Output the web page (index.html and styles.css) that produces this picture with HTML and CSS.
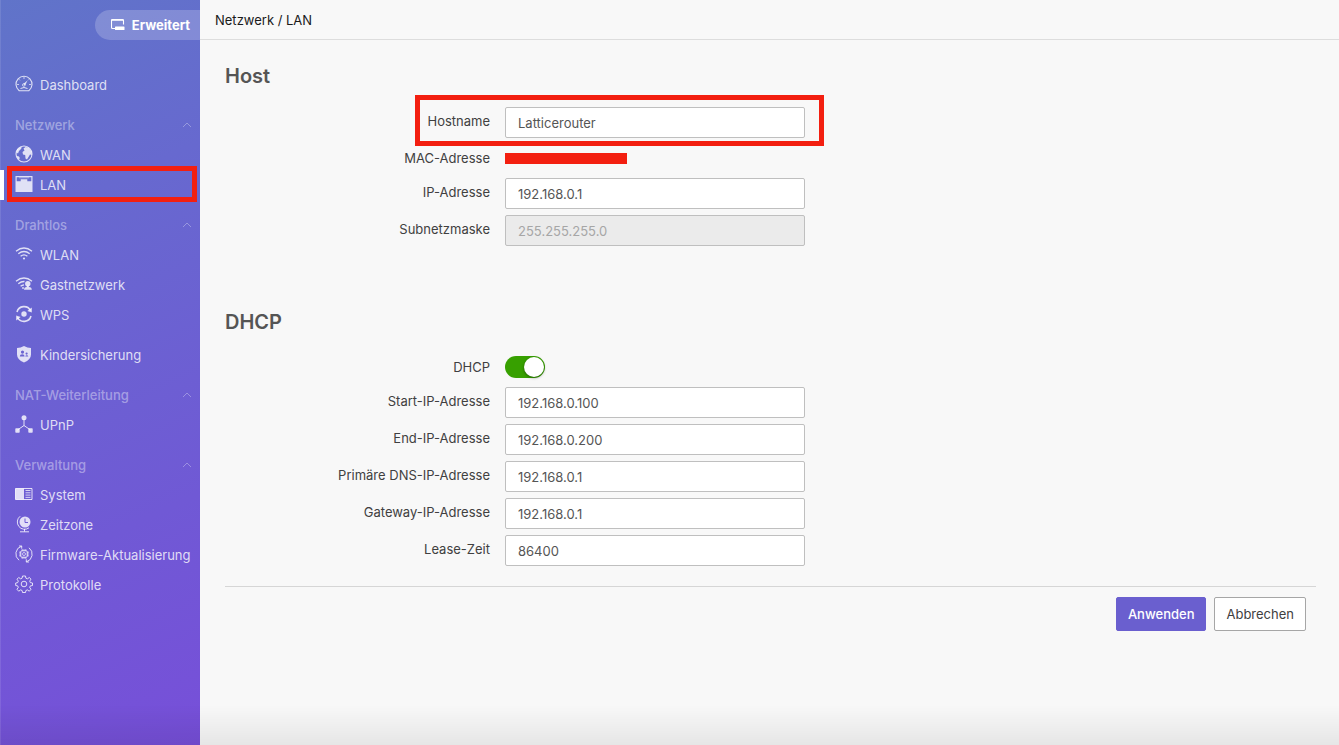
FILE: index.html
```html
<!DOCTYPE html>
<html lang="de">
<head>
    <meta charset="UTF-8">
    <meta name="viewport" content="width=device-width, initial-scale=1.0">
    <title>Netzwerk / LAN</title>
    <link rel="stylesheet" href="styles.css">
</head>
<body>
    <svg class="defs" width="0" height="0" aria-hidden="true">
        <symbol id="chevron" viewBox="0 0 10 6"><path d="M1 5 5 1l4 4" fill="none" stroke="currentColor" stroke-width=".8"/></symbol>
    </svg>

    <div class="layout">
        <aside class="sidebar">
            <button type="button" class="mode">
                <svg width="14" height="12" viewBox="0 0 14 12" fill="none" stroke="currentColor"><path d="M4 9.500H1.500q-1 0-1-1v-7q0-1 1-1h10q1 0 1 1v4" stroke-width="1.100"/><path d="M.5 1.200h12" stroke-width="1.200"/><rect x="4" y="7.500" width="9.500" height="3.500" rx=".6" fill="currentColor" stroke="none"/></svg>
                Erweitert
            </button>

            <nav class="menu">
                <div class="group">
                    <a class="item" href="#dashboard">
                        <svg class="icon" viewBox="0 0 18 18" fill="none" stroke="currentColor"><path d="M4.200 15.700a8 8 0 1 1 9.600 0z" stroke-width="1.100"/><path d="M9 2v2M3.800 4.200l1.100 1.100M2 9.500h2M14 9.500h2M13.800 4.500l-.8.8" stroke-width=".8"/><path d="m12.500 5.500-2.300 4.700-2-1.200z" fill="currentColor" stroke="none"/><circle cx="8.800" cy="10" r="1.300" stroke-width=".8"/><path d="M5.500 13.500q3.500-2 7 0" stroke-width="1"/></svg>
                        Dashboard
                    </a>
                </div>

                <div class="group">
                    <button type="button" class="title">Netzwerk <svg class="chevron"><use href="#chevron"/></svg></button>
                    <a class="item" href="#wan">
                        <svg class="icon" viewBox="0 0 18 18"><circle cx="9" cy="9" r="8" fill="none" stroke="currentColor" stroke-width="1.100"/><path d="M8.500 3.500 10.500 2l3 .5 3 4 .3 3.500-1.800-.5-1.500 2.500-1.500 2.500-1.500-1-.3-3.500-2.200-.5L7.500 7l2-1.500zM2 4.500 5.500 2 7 2.500 5.500 4.500 4 6l-1 2.500-1.500-1zM2 11l2 .5.8 1.500-.8 1.700L2 12.500z" fill="currentColor"/></svg>
                        WAN
                    </a>
                    <a class="item active" href="#lan">
                        <svg class="icon" viewBox="0 0 18 18"><path fill-rule="evenodd" d="M.5 1h17v16H.5zM1.700 2.300v3.900h4V4.200h6.600v2h4V2.300z" fill="currentColor"/><path d="M4 2.300h10v1H4z" fill="currentColor" opacity=".5"/></svg>
                        LAN
                    </a>
                </div>

                <div class="group">
                    <button type="button" class="title">Drahtlos <svg class="chevron"><use href="#chevron"/></svg></button>
                    <a class="item" href="#wlan">
                        <svg class="icon" viewBox="0 0 18 18" fill="none" stroke="currentColor" stroke-width="1.300"><path d="M1 6.200q8-6.400 16 0M3.300 8.800q5.700-4.600 11.400 0M5.600 11.300q3.400-2.700 6.800 0"/><circle cx="9" cy="13.500" r="1.100" fill="currentColor" stroke="none"/></svg>
                        WLAN
                    </a>
                    <a class="item" href="#gast">
                        <svg class="icon" viewBox="0 0 18 18" fill="none" stroke="currentColor" stroke-width="1.300"><path d="M1 6.200q8-6.400 16 0M3.300 8.800Q6.300 6.300 9.500 6.500M5.600 11.300Q7 10 9 9.800"/><circle cx="8" cy="13" r=".9" fill="currentColor" stroke="none"/><circle cx="12.800" cy="8.700" r="2.700" fill="currentColor" stroke="none"/><path d="M11.800 10.500h2v1.500q3 .3 3 2.800H9q0-2.500 2.800-2.800z" fill="currentColor" stroke="none"/></svg>
                        Gastnetzwerk
                    </a>
                    <a class="item" href="#wps">
                        <svg class="icon" viewBox="0 0 18 18" fill="none" stroke="currentColor" stroke-width="1.600"><path d="M2 7a7.300 7.300 0 0 1 13.500-1.500M16 11a7.300 7.300 0 0 1-13.500 1.500"/><circle cx="9" cy="9" r="2.700" fill="currentColor" stroke="none"/><path d="M16.800 2.500v5l-4.500-1.500zM1.200 15.500v-5L5.700 12z" fill="currentColor" stroke="none"/></svg>
                        WPS
                    </a>
                </div>

                <div class="group">
                    <a class="item" href="#kinder">
                        <svg class="icon" viewBox="0 0 18 18"><path fill-rule="evenodd" d="M9 1q3.300 2 7 2v6.500q0 5-7 8-7-3-7-8V3q3.700 0 7-2zM7.500 5.500a1.600 1.600 0 1 0 0 3.200 1.600 1.600 0 0 0 0-3.200zM4.800 11.500h4.800q0-2.200-2.400-2.200t-2.400 2.200zM11.600 7.500a1.100 1.100 0 1 0 0 2.200 1.100 1.100 0 0 0 0-2.200zM10.300 11.500h3q0-1.300-1.500-1.300t-1.500 1.300z" fill="currentColor"/></svg>
                        Kindersicherung
                    </a>
                </div>

                <div class="group">
                    <button type="button" class="title">NAT-Weiterleitung <svg class="chevron"><use href="#chevron"/></svg></button>
                    <a class="item" href="#upnp">
                        <svg class="icon" viewBox="0 0 18 18" fill="currentColor"><path d="M9 4v6.500L2.500 15M9 10.500l6.500 4.500" fill="none" stroke="currentColor"/><circle cx="9" cy="2.800" r="2.500"/><rect x=".3" y="13.300" width="4.400" height="4.400" rx=".7"/><rect x="13.300" y="13.300" width="4.400" height="4.400" rx=".7"/></svg>
                        UPnP
                    </a>
                </div>

                <div class="group">
                    <button type="button" class="title">Verwaltung <svg class="chevron"><use href="#chevron"/></svg></button>
                    <a class="item" href="#system">
                        <svg class="icon" viewBox="0 0 18 18"><path d="M.5 3.500h16.500v11H.5z" fill="none" stroke="currentColor"/><path d="M.5 3.500H9v11H.5z" fill="currentColor"/><path d="M10.500 5.500h5M10.500 7.800h5M10.500 10.100h5M10.500 12.400h5" stroke="currentColor" stroke-width=".9"/></svg>
                        System
                    </a>
                    <a class="item" href="#zeitzone">
                        <svg class="icon" viewBox="0 0 18 18" fill="none" stroke="currentColor"><circle cx="10" cy="7" r="5.500" fill="currentColor" stroke="none"/><path d="M5.200 1.200a7 7 0 0 0 8.800 11.600M9.500 14v2.500M5 16.800h9"/><path class="cut" d="M10 3.500v4h3"/></svg>
                        Zeitzone
                    </a>
                    <a class="item" href="#firmware">
                        <svg class="icon" viewBox="0 0 18 18" fill="none" stroke="currentColor"><path d="M6.500 1.200a8 8 0 0 0-2.500 14M11.500 16.800a8 8 0 0 0 2.500-14M4 1h2.700v2.700M14 17h-2.700v-2.700"/><rect x="5.800" y="5.800" width="6.400" height="6.400" rx="1"/><circle cx="9" cy="9" r="1.500" stroke-width=".8"/><path d="M7.200 4v2M9 4v2M10.800 4v2M7.200 12v2M9 12v2M10.800 12v2M4 7.200h2M4 9h2M4 10.800h2M12 7.200h2M12 9h2M12 10.800h2" stroke-width=".8"/></svg>
                        Firmware-Aktualisierung
                    </a>
                    <a class="item" href="#protokolle">
                        <svg class="icon" viewBox="0 0 18 18" fill="none" stroke="currentColor"><circle cx="9" cy="9" r="2.800"/><path stroke-linejoin="round" d="M7.500 1h3l.4 2.200 1.500.6 1.900-1.300 1.700 1.700-1.300 1.900.6 1.500 2.200.4v2.500l-2.200.4-.6 1.500 1.300 1.900-1.700 1.900-1.900-1.300-1.500.6-.4 2h-3l-.4-2-1.500-.6-1.900 1.300L2 14.300l1.300-1.900-.6-1.500-2-.4V8l2-.4.6-1.500L2 4.200l1.700-1.700 1.900 1.300 1.500-.6z"/></svg>
                        Protokolle
                    </a>
                </div>
            </nav>
        </aside>

        <main class="main">
            <header class="topbar">Netzwerk / LAN</header>

            <form class="content">
                <section class="section">
                    <h2>Host</h2>
                    <div class="row marked">
                        <label for="hostname">Hostname</label>
                        <input type="text" id="hostname" value="Latticerouter">
                    </div>
                    <div class="row short">
                        <span class="label">MAC-Adresse</span>
                        <span class="redacted"></span>
                    </div>
                    <div class="row">
                        <label for="ip">IP-Adresse</label>
                        <input type="text" id="ip" value="192.168.0.1">
                    </div>
                    <div class="row">
                        <label for="mask">Subnetzmaske</label>
                        <input type="text" id="mask" value="255.255.255.0" disabled>
                    </div>
                </section>

                <section class="section">
                    <h2>DHCP</h2>
                    <div class="row short">
                        <label for="dhcp">DHCP</label>
                        <input type="checkbox" class="switch" id="dhcp" checked>
                    </div>
                    <div class="row">
                        <label for="start">Start-IP-Adresse</label>
                        <input type="text" id="start" value="192.168.0.100">
                    </div>
                    <div class="row">
                        <label for="end">End-IP-Adresse</label>
                        <input type="text" id="end" value="192.168.0.200">
                    </div>
                    <div class="row">
                        <label for="dns">Primäre DNS-IP-Adresse</label>
                        <input type="text" id="dns" value="192.168.0.1">
                    </div>
                    <div class="row">
                        <label for="gateway">Gateway-IP-Adresse</label>
                        <input type="text" id="gateway" value="192.168.0.1">
                    </div>
                    <div class="row">
                        <label for="lease">Lease-Zeit</label>
                        <input type="text" id="lease" value="86400">
                    </div>
                </section>

                <div class="actions">
                    <button type="submit" class="btn primary">Anwenden</button>
                    <button type="reset" class="btn">Abbrechen</button>
                </div>
            </form>
        </main>
    </div>
</body>
</html>
```

FILE: styles.css
```css
*, *::before, *::after {
    box-sizing: border-box;
}
body {
    margin: 0;
    font-family: Inter, "Liberation Sans", sans-serif;
    font-size: 13px;
    line-height: 20px;
    color: #404040;
    background: #f8f8f8;
}
button, input {
    font: inherit;
}
.defs {
    position: absolute;
}
.layout {
    display: flex;
    min-height: 100vh;
}
/* shade along the bottom edge of the window */
.layout::after {
    content: "";
    position: fixed;
    left: 0;
    right: 0;
    bottom: 0;
    height: 40px;
    background: linear-gradient(rgba(0, 0, 0, 0), rgba(0, 0, 0, 0.07));
    pointer-events: none;
}

.sidebar {
    flex: 0 0 200px;
    min-width: 0;
    display: flex;
    flex-direction: column;
    padding-top: 10px;
    border-left: 1px solid rgba(255, 255, 255, 0.1);
    background: linear-gradient(155deg, #6074c9 0%, #6769cf 28%, #7059d5 70%, #774fd9 100%) border-box;
}
.mode {
    align-self: flex-end;
    display: flex;
    align-items: center;
    gap: 7px;
    height: 30px;
    padding: 0 10px 0 16px;
    border: 0;
    border-radius: 15px 0 0 15px;
    background: rgba(255, 255, 255, 0.2);
    color: #fff;
    font-weight: 700;
}
.menu {
    display: flex;
    flex-direction: column;
    gap: 10px;
    padding-top: 30px;
}
.title, .item {
    display: flex;
    align-items: center;
    width: 100%;
    height: 30px;
    padding: 0 8px 0 14px;
}
.title {
    justify-content: space-between;
    border: 0;
    background: none;
    color: rgba(255, 255, 255, 0.4);
    font-weight: 500;
}
.chevron {
    width: 10px;
    height: 6px;
}
.item {
    position: relative;
    gap: 7px;
    color: rgba(255, 255, 255, 0.8);
    text-decoration: none;
    white-space: nowrap;
}
.icon {
    flex: none;
    width: 18px;
    height: 18px;
    margin-bottom: 2px;
}
.cut {
    stroke: #6e5dd4;
}
.active::before {
    content: "";
    position: absolute;
    left: -1px;
    width: 4px;
    height: 30px;
    background: #fff;
}
.active::after, .marked::after {
    content: "";
    position: absolute;
    border: 5px solid #f31f10;
    pointer-events: none;
}
.active::after {
    inset: -4px 3px -2px 6px;
}

.main {
    flex: 1;
    min-width: 0;
}
.topbar {
    height: 40px;
    padding: 10px 15px;
    border-bottom: 1px solid #ddd;
    color: #1a1a1a;
}
.content {
    padding: 24px 23px 24px 25px;
}
.section + .section {
    margin-top: 64px;
}
h2 {
    margin: 0 0 19px;
    font-size: 20px;
    line-height: 24px;
    font-weight: 600;
    color: #555;
}
.row {
    position: relative;
    display: grid;
    grid-template-columns: 265px 300px;
    column-gap: 15px;
    align-items: center;
    height: 31px;
    margin-bottom: 6px;
}
.short {
    height: 28px;
}
.row label, .label {
    padding-bottom: 3px;
    text-align: right;
}
.short label, .short .label {
    padding-bottom: 0;
}
.row input[type="text"] {
    width: 100%;
    height: 31px;
    padding: 0 12px;
    border: 1px solid #bfbfbf;
    border-radius: 2px;
    background: #fff;
    color: #555;
}
.row input[type="text"]:disabled {
    background: #ebebeb;
    color: #a6a6a6;
}
.marked::after {
    top: -12px;
    left: 190px;
    width: 409px;
    height: 51px;
}
.redacted {
    width: 122px;
    height: 11px;
    background: #f31f10;
}
.switch {
    appearance: none;
    width: 40px;
    height: 22px;
    margin: 0;
    padding: 1px;
    border-radius: 11px;
    background: #999;
}
.switch::before {
    content: "";
    display: block;
    width: 20px;
    height: 20px;
    border-radius: 50%;
    background: #fff;
    box-shadow: 0 1px 3px rgba(0, 0, 0, 0.4);
}
.switch:checked {
    background: #37a000;
}
.switch:checked::before {
    margin-left: auto;
}
.actions {
    display: flex;
    justify-content: flex-end;
    gap: 8px;
    margin-top: 20px;
    padding: 10px 10px 0 0;
    border-top: 1px solid #d6d6d6;
}
.btn {
    height: 34px;
    padding: 0 11px;
    border: 1px solid #a6a6a6;
    border-radius: 2px;
    background: #fff;
    color: #404040;
}
.primary {
    border-color: #6a5fcf;
    background: #6a5fcf;
    color: #fff;
    font-weight: 500;
}
```
